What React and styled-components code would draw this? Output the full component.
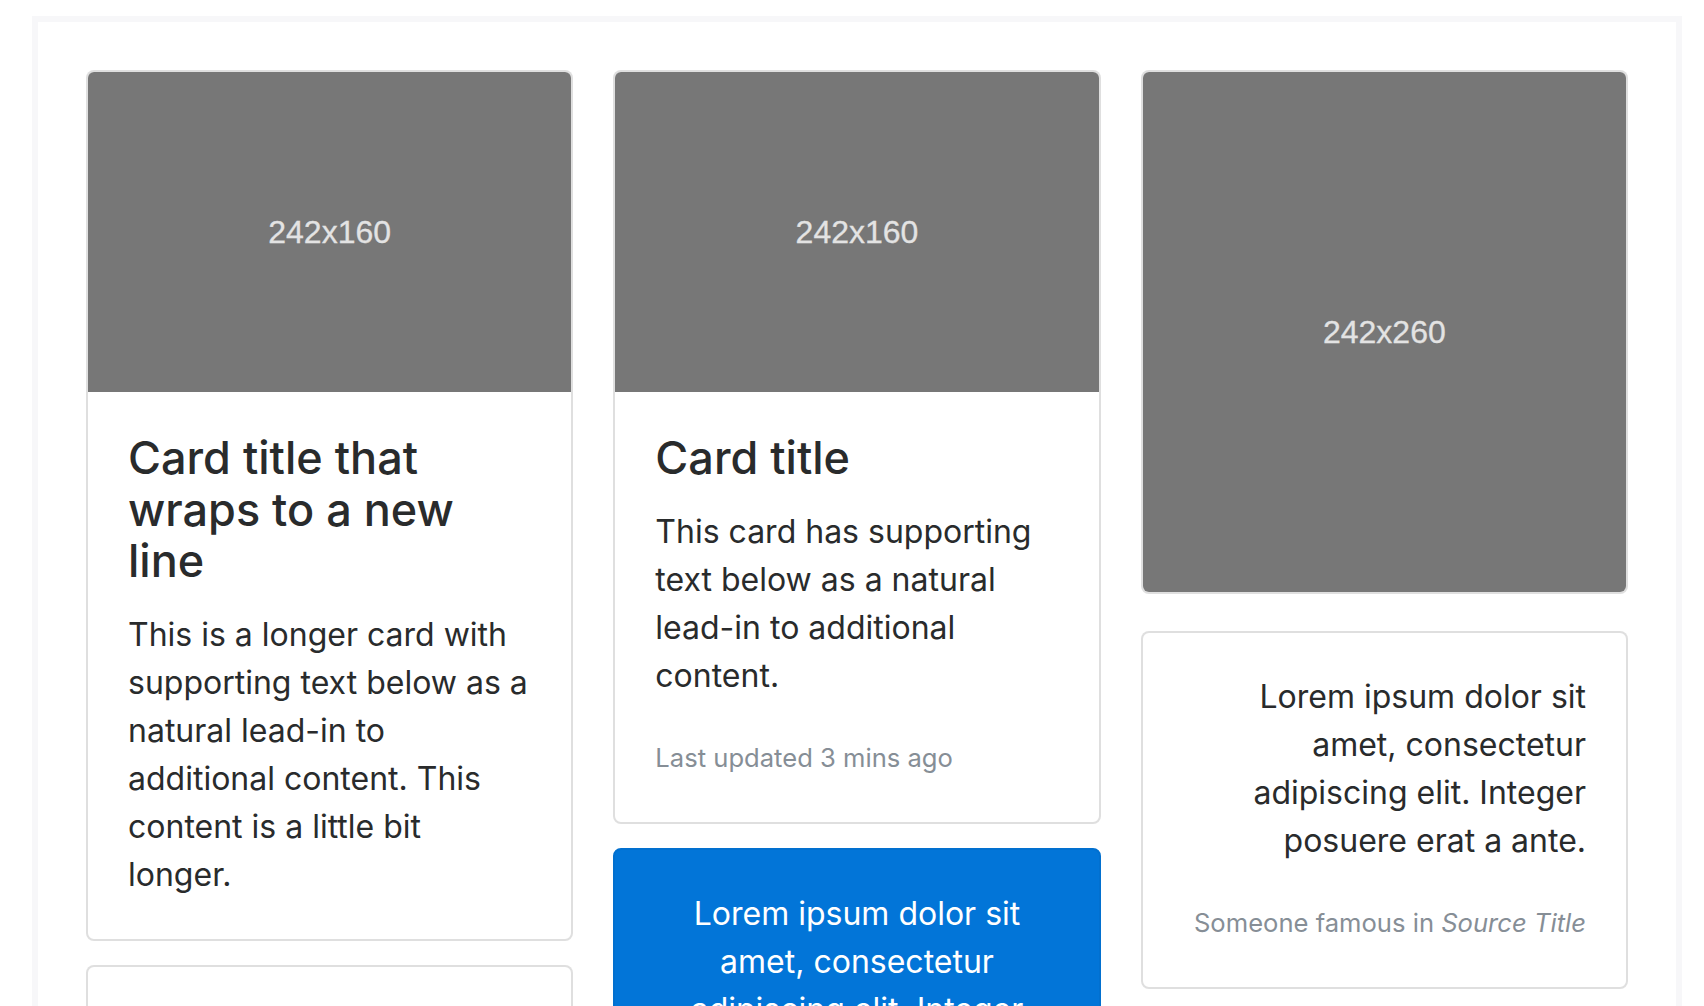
import React from "react";
import styled, { createGlobalStyle } from "styled-components";

const GlobalStyle = createGlobalStyle`
  html, body {
    margin: 0;
    padding: 0;
    overflow: hidden;
    background: #ffffff;
  }
  body {
    font-family: Inter, "Noto Sans", "Liberation Sans", sans-serif;
    font-size: 32px;
    line-height: 48px;
    color: #292b2c;
    -webkit-font-smoothing: antialiased;
  }
  *, *::before, *::after { box-sizing: border-box; }
`;

const Frame = styled.div`
  width: 1650px;
  margin: 16px 0 0 32px;
  border: 6px solid #f7f7f9;
  padding: 48px;
  background: #ffffff;
`;

const Columns = styled.div`
  display: grid;
  grid-template-columns: repeat(3, 1fr);
  column-gap: 40px;
  align-items: start;
`;

const Column = styled.div`
  display: flex;
  flex-direction: column;
  gap: 24px;
`;

const Card = styled.div`
  display: flex;
  flex-direction: column;
  border: 2px solid ${(p) => (p.$primary ? "#0270cf" : "rgba(0, 0, 0, 0.125)")};
  border-radius: 8px;
  overflow: hidden;
  background: ${(p) => (p.$primary ? "#0275d8" : "#ffffff")};
  color: ${(p) => (p.$primary ? "#ffffff" : "#292b2c")};
  margin-bottom: ${(p) => p.$extraSpace || 0}px;
`;

const Placeholder = styled.div`
  display: flex;
  align-items: center;
  justify-content: center;
  height: ${(p) => p.$h}px;
  background: #777777;
  color: #e3e3e3;
  font-family: "Liberation Sans", Arial, sans-serif;
  font-size: 32px;
  line-height: 1;
  -webkit-text-stroke: 0.3px #e3e3e3;
`;

const CardBody = styled.div`
  padding: 40px;
  text-align: ${(p) => p.$align || "left"};
`;

const Title = styled.h5`
  margin: 0 0 24px;
  font-size: 45px;
  line-height: 51.5px;
  font-weight: 500;
  letter-spacing: 0;
  color: #292b2c;
`;

const Text = styled.p`
  margin: 0 0 32px;
  &:last-child {
    margin-bottom: 0;
  }
`;

const Muted = styled.small`
  font-size: 25.6px;
  color: #868e96;
`;

const Quote = styled.blockquote`
  margin: 0;
  padding: 40px;
  text-align: ${(p) => p.$align || "left"};
`;

const QuoteText = styled.p`
  margin: 0 0 32px;
`;

const QuoteFooter = styled.footer`
  font-size: 32px;
  line-height: 48px;
`;

const Cite = styled.cite`
  font-style: italic;
`;

export default function App() {
  return (
    <>
      <GlobalStyle />
      <Frame>
        <Columns>
          <Column>
            <Card>
              <Placeholder $h={320}>242x160</Placeholder>
              <CardBody>
                <Title>Card title that wraps to a new line</Title>
                <Text>
                  This is a longer card with supporting text below as a natural
                  lead-in to additional content. This content is a little bit
                  longer.
                </Text>
              </CardBody>
            </Card>
            <Card>
              <Quote>
                <QuoteText>
                  A well-known quote, contained in a blockquote element.
                </QuoteText>
                <QuoteFooter>
                  <Muted>
                    Someone famous in <Cite title="Source Title">Source Title</Cite>
                  </Muted>
                </QuoteFooter>
              </Quote>
            </Card>
          </Column>

          <Column>
            <Card>
              <Placeholder $h={320}>242x160</Placeholder>
              <CardBody>
                <Title>Card title</Title>
                <Text>
                  This card has supporting text below as a natural lead-in to
                  additional content.
                </Text>
                <Text>
                  <Muted>Last updated 3 mins ago</Muted>
                </Text>
              </CardBody>
            </Card>
            <Card $primary>
              <Quote $align="center">
                <QuoteText>
                  Lorem ipsum dolor sit amet, consectetur adipiscing elit.
                  Integer posuere erat.
                </QuoteText>
                <QuoteFooter>
                  <Muted>
                    Someone famous in <Cite title="Source Title">Source Title</Cite>
                  </Muted>
                </QuoteFooter>
              </Quote>
            </Card>
          </Column>

          <Column>
            <Card $extraSpace={13}>
              <Placeholder $h={520}>242x260</Placeholder>
            </Card>
            <Card>
              <Quote $align="right">
                <QuoteText>
                  Lorem ipsum dolor sit amet, consectetur adipiscing elit.
                  Integer posuere erat a ante.
                </QuoteText>
                <QuoteFooter>
                  <Muted>
                    Someone famous in <Cite title="Source Title">Source Title</Cite>
                  </Muted>
                </QuoteFooter>
              </Quote>
            </Card>
          </Column>
        </Columns>
      </Frame>
    </>
  );
}
